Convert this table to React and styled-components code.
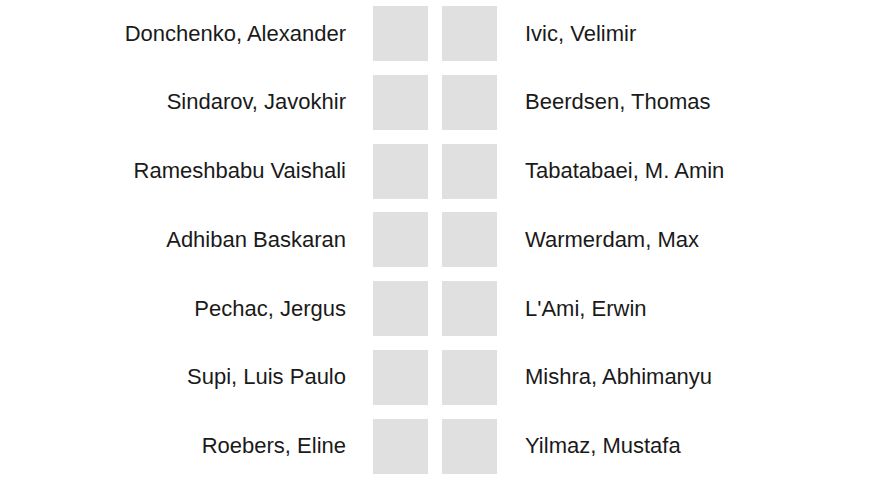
import React from 'react';
import styled, { createGlobalStyle } from 'styled-components';

const GlobalStyle = createGlobalStyle`
  html, body {
    margin: 0;
    padding: 0;
    background: #fff;
  }
  body {
    font-family: "Liberation Sans", Arial, sans-serif;
  }
`;

const pairings = [
  ['Donchenko, Alexander', 'Ivic, Velimir'],
  ['Sindarov, Javokhir', 'Beerdsen, Thomas'],
  ['Rameshbabu Vaishali', 'Tabatabaei, M. Amin'],
  ['Adhiban Baskaran', 'Warmerdam, Max'],
  ['Pechac, Jergus', "L'Ami, Erwin"],
  ['Supi, Luis Paulo', 'Mishra, Abhimanyu'],
  ['Roebers, Eline', 'Yilmaz, Mustafa'],
];

const List = styled.div`
  display: flex;
  flex-direction: column;
  gap: 13.8px;
  padding-top: 6px;
`;

const Row = styled.div`
  display: flex;
  align-items: center;
  height: 55px;
`;

const Player = styled.div`
  font-size: 22px;
  color: #1a1a1a;
  white-space: nowrap;
  text-align: ${(p) => (p.$side === 'left' ? 'right' : 'left')};
  width: ${(p) => (p.$side === 'left' ? '346px' : 'auto')};
  margin-left: ${(p) => (p.$side === 'left' ? '0' : '28px')};
  margin-right: ${(p) => (p.$side === 'left' ? '27px' : '0')};
`;

const Slots = styled.div`
  display: flex;
  gap: 14px;
`;

const Slot = styled.div`
  width: 55px;
  height: 55px;
  background: #e0e0e0;
`;

export default function App() {
  return (
    <>
      <GlobalStyle />
      <List>
        {pairings.map(([white, black]) => (
          <Row key={white}>
            <Player $side="left">{white}</Player>
            <Slots>
              <Slot />
              <Slot />
            </Slots>
            <Player $side="right">{black}</Player>
          </Row>
        ))}
      </List>
    </>
  );
}
